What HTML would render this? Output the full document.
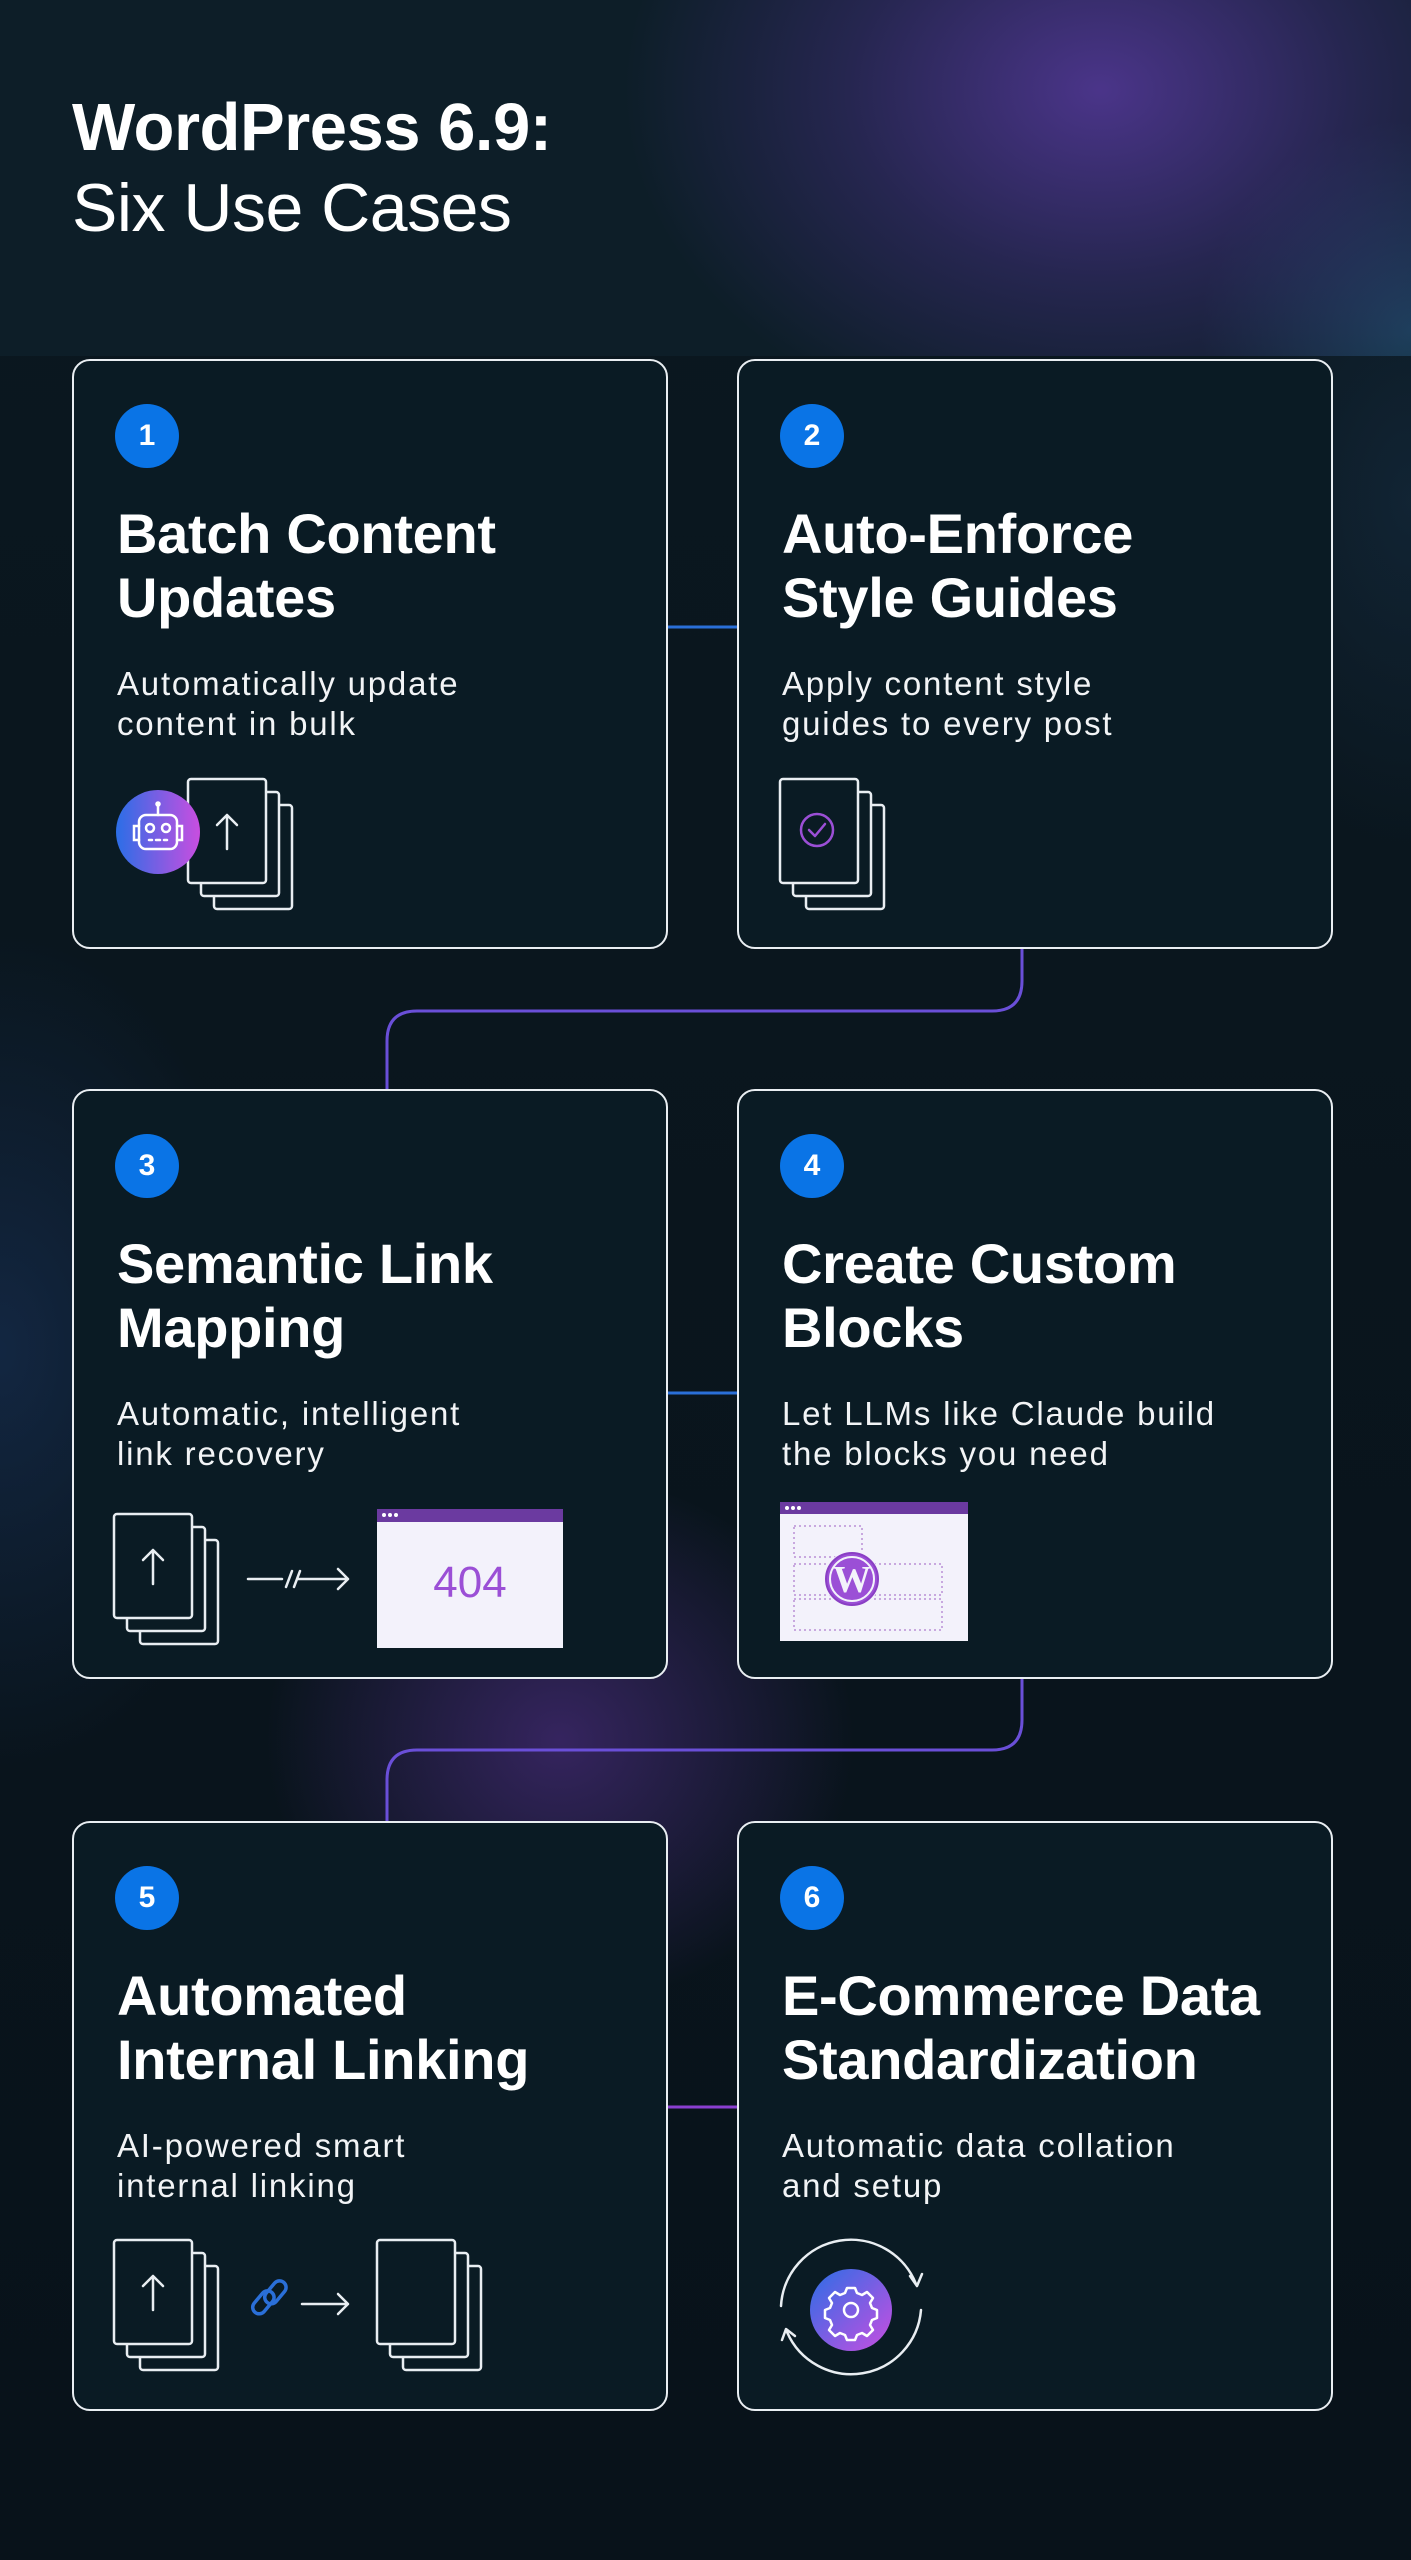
<!DOCTYPE html>
<html><head><meta charset="utf-8"><style>
*{margin:0;padding:0;box-sizing:border-box}
html,body{width:1411px;height:2560px;overflow:hidden}
body{position:relative;background:#09141b;font-family:"Liberation Sans",sans-serif;color:#fff}
.bg{position:absolute;left:0;top:0;width:1411px;height:2560px;
background:
radial-gradient(ellipse 420px 380px at 560px 1740px,rgba(90,50,150,.55),rgba(90,50,150,0) 70%),
radial-gradient(ellipse 380px 600px at 0px 1350px,rgba(30,60,110,.45),rgba(30,60,110,0) 70%),
radial-gradient(ellipse 300px 500px at 1411px 500px,rgba(30,60,90,.35),rgba(0,0,0,0) 70%),
linear-gradient(#0b1820,#08121a)}
.hdr{position:absolute;left:0;top:0;width:1411px;height:356px;
background:
radial-gradient(ellipse 560px 420px at 1100px 90px,rgba(95,60,170,.75),rgba(75,50,140,.4) 45%,rgba(50,40,110,0) 85%),
radial-gradient(ellipse 300px 300px at 1411px 330px,rgba(40,90,130,.55),rgba(0,0,0,0) 70%),
#0d1e28}
.h1{position:absolute;left:72px;top:88px;font-size:67px;font-weight:bold;line-height:80px;letter-spacing:-0.5px}
.h2{position:absolute;left:72px;top:168px;font-size:68px;line-height:80px;letter-spacing:-0.5px}
.card{position:absolute;width:596px;height:590px;background:#0a1b24;border:2.5px solid #e9eef2;border-radius:18px}
.num{position:absolute;left:41px;top:43px;width:64px;height:64px;border-radius:50%;background:#0a74e6;font-weight:bold;font-size:30px;line-height:64px;text-align:center}
.t{position:absolute;left:43px;top:141px;font-size:56px;font-weight:bold;line-height:64px;white-space:nowrap;letter-spacing:-0.3px}
.s{position:absolute;left:43px;top:303px;font-size:33px;line-height:40px;letter-spacing:1.8px;white-space:nowrap;color:#f2f4f6}
svg.ov{position:absolute;left:0;top:0}
</style></head><body>
<div class="bg"></div>
<div class="hdr"></div>
<div class="h1">WordPress 6.9:</div>
<div class="h2">Six Use Cases</div>

<svg class="ov" width="1411" height="2560" style="z-index:0">
<g fill="none" stroke-width="3">
<line x1="668" y1="627" x2="738" y2="627" stroke="#2a6fd8"/>
<path d="M1022 949 V981 Q1022 1011 992 1011 H417 Q387 1011 387 1041 V1089" stroke="#6a4fd8"/>
<line x1="668" y1="1393" x2="738" y2="1393" stroke="#2a6fd8"/>
<path d="M1022 1679 V1720 Q1022 1750 992 1750 H417 Q387 1750 387 1780 V1821" stroke="#6a4fd8"/>
<line x1="668" y1="2107" x2="738" y2="2107" stroke="#8a3fd0"/>
</g>
</svg>

<div class="card" style="left:72px;top:359px"><div class="num">1</div><div class="t">Batch Content<br>Updates</div><div class="s">Automatically update<br>content in bulk</div></div>
<div class="card" style="left:737px;top:359px"><div class="num">2</div><div class="t">Auto-Enforce<br>Style Guides</div><div class="s">Apply content style<br>guides to every post</div></div>
<div class="card" style="left:72px;top:1089px"><div class="num">3</div><div class="t">Semantic Link<br>Mapping</div><div class="s">Automatic, intelligent<br>link recovery</div></div>
<div class="card" style="left:737px;top:1089px"><div class="num">4</div><div class="t">Create Custom<br>Blocks</div><div class="s">Let LLMs like Claude build<br>the blocks you need</div></div>
<div class="card" style="left:72px;top:1821px"><div class="num">5</div><div class="t">Automated<br>Internal Linking</div><div class="s">AI-powered smart<br>internal linking</div></div>
<div class="card" style="left:737px;top:1821px"><div class="num">6</div><div class="t">E-Commerce Data<br>Standardization</div><div class="s">Automatic data collation<br>and setup</div></div>

<svg class="ov" width="1411" height="2560" style="z-index:2">
<defs>
<linearGradient id="g1" x1="0" y1="0" x2="1" y2="0"><stop offset="0" stop-color="#2b6ee6"/><stop offset="1" stop-color="#c94ee0"/></linearGradient>
<linearGradient id="g2" x1="0" y1="0" x2="1" y2="1"><stop offset="0" stop-color="#2b6ee6"/><stop offset="1" stop-color="#c94ee0"/></linearGradient>
<g id="docs"><rect x="26" y="26" width="78" height="104" rx="3" fill="#0a1b24" stroke="#e9eef2" stroke-width="2.5"/><rect x="13" y="13" width="78" height="104" rx="3" fill="#0a1b24" stroke="#e9eef2" stroke-width="2.5"/><rect x="0" y="0" width="78" height="104" rx="3" fill="#0a1b24" stroke="#e9eef2" stroke-width="2.5"/></g>
<g id="up" fill="none" stroke="#e9eef2" stroke-width="2.5" stroke-linecap="round" stroke-linejoin="round"><path d="M39 70 V36 M29 46 L39 36 L49 46"/></g>
</defs>
<use href="#docs" x="188" y="779"/><use href="#up" x="188" y="779"/>
<circle cx="158" cy="832" r="42" fill="url(#g1)"/>
<g fill="none" stroke="#fff" stroke-width="2.5" stroke-linecap="round">
<rect x="139" y="815" width="38" height="34" rx="7"/><path d="M158 815 V805"/><circle cx="158" cy="804" r="1.5" fill="#fff"/>
<path d="M139 826 h-5 v14 h5 M177 826 h5 v14 h-5"/>
<circle cx="150" cy="828" r="4"/><circle cx="166" cy="828" r="4"/>
<path d="M149 840 h3 M156 840 h4 M164 840 h3"/></g>
<use href="#docs" x="780" y="779"/>
<circle cx="817" cy="830" r="16" fill="none" stroke="#9b4fd6" stroke-width="2.5"/>
<path d="M809 830 l6 6 l10 -12" fill="none" stroke="#9b4fd6" stroke-width="2.5" stroke-linecap="round" stroke-linejoin="round"/>
<use href="#docs" x="114" y="1514"/><use href="#up" x="114" y="1514"/>
<g fill="none" stroke="#e9eef2" stroke-width="2.5" stroke-linecap="round" stroke-linejoin="round">
<path d="M248 1579 H282 M286 1587 L292 1571 M294 1587 L300 1571 M297 1579 H348 M338 1569 L348 1579 L338 1589"/></g>
<rect x="377" y="1509" width="186" height="139" fill="#f3f2fb"/>
<rect x="377" y="1509" width="186" height="13" fill="#6b3aa0"/>
<circle cx="384" cy="1515" r="2" fill="#fff"/><circle cx="390" cy="1515" r="2" fill="#fff"/><circle cx="396" cy="1515" r="2" fill="#fff"/>
<text x="470" y="1597" text-anchor="middle" font-family="Liberation Sans" font-size="44" fill="#9b4fd6">404</text>
<rect x="780" y="1502" width="188" height="139" fill="#f3f2fb"/>
<rect x="780" y="1502" width="188" height="12" fill="#6b3aa0"/>
<circle cx="787" cy="1508" r="2" fill="#fff"/><circle cx="793" cy="1508" r="2" fill="#fff"/><circle cx="799" cy="1508" r="2" fill="#fff"/>
<g fill="none" stroke="#b98fd6" stroke-width="1.5" stroke-dasharray="2 3">
<rect x="794" y="1526" width="68" height="31"/><rect x="794" y="1564" width="148" height="31"/><rect x="794" y="1599" width="148" height="31"/></g>
<circle cx="852" cy="1579" r="28" fill="#f3f2fb"/>
<circle cx="852" cy="1579" r="26" fill="#9b4fd6" stroke="#8a3fc4" stroke-width="2"/>
<circle cx="852" cy="1579" r="22" fill="none" stroke="#f3f2fb" stroke-width="2"/>
<text x="852" y="1592" text-anchor="middle" font-family="Liberation Serif" font-weight="bold" font-size="38" fill="#f3f2fb">W</text>
<use href="#docs" x="114" y="2240"/><use href="#up" x="114" y="2240"/>
<g fill="none" stroke="#2a6fd8" stroke-width="3.5" stroke-linecap="round">
<rect x="250" y="2296" width="26" height="13" rx="6.5" transform="rotate(-50 263 2302)"/>
<rect x="262" y="2286" width="26" height="13" rx="6.5" transform="rotate(-50 275 2292)"/></g>
<path d="M302 2304 H348 M338 2294 L348 2304 L338 2314" fill="none" stroke="#e9eef2" stroke-width="2.5" stroke-linecap="round" stroke-linejoin="round"/>
<use href="#docs" x="377" y="2240"/>
<g fill="none" stroke="#e9eef2" stroke-width="2.5" stroke-linecap="round" stroke-linejoin="round">
<path d="M781 2306 A70 70 0 0 1 916 2284"/><path d="M910 2276 L917 2286 L922 2274"/>
<path d="M921 2310 A70 70 0 0 1 787 2332"/><path d="M782 2340 L786 2329 L795 2336"/></g>
<circle cx="851" cy="2310" r="41" fill="url(#g2)"/>
<g fill="none" stroke="#fff" stroke-width="2.5" stroke-linejoin="round">
<path d="M847 2288 h8 l2 5 l5 2 l5 -3 l6 6 l-3 5 l2 5 l5 2 v8 l-5 2 l-2 5 l3 5 l-6 6 l-5 -3 l-5 2 l-2 5 h-8 l-2 -5 l-5 -2 l-5 3 l-6 -6 l3 -5 l-2 -5 l-5 -2 v-8 l5 -2 l2 -5 l-3 -5 l6 -6 l5 3 l5 -2 z"/>
<circle cx="851" cy="2310" r="7"/></g>
</svg>
</body></html>
